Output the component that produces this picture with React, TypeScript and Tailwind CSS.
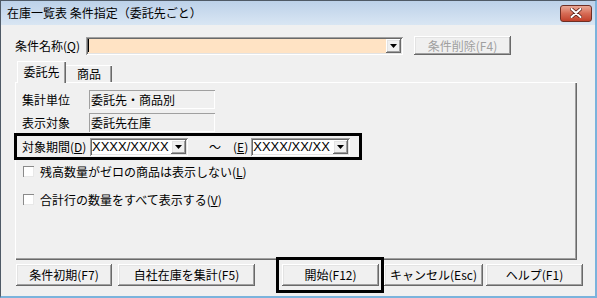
import React from "react";

const raised =
  "bg-[#f0f0f0] shadow-[inset_-1px_-1px_0_#696969,inset_1px_1px_0_#ffffff,inset_-2px_-2px_0_#a0a0a0,inset_2px_2px_0_#e3e3e3]";
const sunken =
  "shadow-[inset_1px_1px_0_#a0a0a0,inset_-1px_-1px_0_#ffffff,inset_2px_2px_0_#696969,inset_-2px_-2px_0_#e3e3e3]";
const flat =
  "shadow-[inset_1px_1px_0_#a0a0a0,inset_-1px_-1px_0_#ffffff]";

function Arrow() {
  return (
    <svg width="7" height="4" viewBox="0 0 7 4">
      <path d="M0 0H7L3.5 4Z" fill="#000" />
    </svg>
  );
}

function DropBtn() {
  return (
    <div className={`flex h-[14px] w-[15px] shrink-0 items-center justify-center ${raised}`}>
      <Arrow />
    </div>
  );
}

function Button({
  className,
  children,
  disabled,
}: {
  className: string;
  children: React.ReactNode;
  disabled?: boolean;
}) {
  return (
    <div
      className={`flex shrink-0 items-center justify-center ${raised} ${className} ${
        disabled ? "text-[#a0a0a0]" : "text-black"
      }`}
    >
      {children}
    </div>
  );
}

function Check({ children }: { children: React.ReactNode }) {
  return (
    <div className="flex h-[13px] items-center pl-[1px]">
      <div className="h-[11px] w-[11px] bg-white shadow-[inset_1px_1px_0_#8a8a8a,inset_-1px_-1px_0_#e8e8e8]" />
      <span className="ml-[6px]">{children}</span>
    </div>
  );
}

export default function App() {
  return (
    <div className="flex h-[298px] w-[597px] flex-col overflow-hidden border-l border-t border-[#4f5a66] border-r-2 border-b-2 border-r-[#7bb3dc] border-b-[#7bb3dc] bg-[#f0f0f0] font-['Noto_Sans_CJK_JP',sans-serif] text-[12px] leading-none text-black">
      {/* title bar */}
      <div className="flex h-[24px] shrink-0 items-center justify-between bg-gradient-to-b from-[#bcd1e9] to-[#d9e6f3] pl-[6px] pr-[3px]">
        <span className="text-[12px]">在庫一覧表 条件指定（委託先ごと）</span>
        <div className="flex h-[17px] w-[32px] items-center justify-center rounded-[3px] border border-[#6e2f25] bg-gradient-to-b from-[#e9a896] via-[#d66b55] to-[#c1402a]">
          <svg width="12" height="10" viewBox="0 0 12 10">
            <path d="M1.5 1L10.5 9M10.5 1L1.5 9" stroke="#5a2018" strokeWidth="3.6" strokeLinecap="round" />
            <path d="M1.5 1L10.5 9M10.5 1L1.5 9" stroke="#ffffff" strokeWidth="2" strokeLinecap="round" />
          </svg>
        </div>
      </div>

      {/* row 1 */}
      <div className="mt-[11px] flex h-[19px] items-center pl-[14px]">
        <span className="w-[71px] shrink-0">
          条件名称(<span className="underline">Q</span>)
        </span>
        <div className={`flex h-[18px] w-[317px] items-center justify-between bg-[#ffe3c4] pl-[2px] pr-[2px] ${sunken}`}>
          <div className="h-[13px] w-[1px] bg-black" />
          <DropBtn />
        </div>
        <Button className="ml-[11px] h-[19px] w-[97px]" disabled>
          条件削除(F4)
        </Button>
      </div>

      {/* tabs */}
      <div className="ml-[14px] mt-[6px] flex w-[562px] flex-col">
        <div className="flex h-[21px] items-end pl-[2px]">
          <div className="relative z-10 -mb-px flex h-[22px] w-[49px] items-center justify-center bg-[#f0f0f0] shadow-[inset_1px_1px_0_#ffffff,inset_-1px_0_0_#696969,inset_-2px_0_0_#a0a0a0]">
            委託先
          </div>
          <div className="flex h-[17px] w-[46px] items-center justify-center pt-[1px] shadow-[inset_0_1px_0_#ffffff,inset_-1px_0_0_#696969,inset_-2px_0_0_#a0a0a0]">
            商品
          </div>
        </div>
        <div className="flex h-[178px] flex-col bg-[#f0f0f0] pl-[7px] pt-[8px] shadow-[inset_1px_1px_0_#ffffff,inset_-1px_-1px_0_#696969,inset_-2px_-2px_0_#a0a0a0]">
          <div className="flex h-[19px] items-center">
            <span className="w-[67px] shrink-0">集計単位</span>
            <div className={`flex h-[19px] w-[126px] items-center pl-[2px] ${flat}`}>委託先・商品別</div>
          </div>
          <div className="mt-[4px] flex h-[19px] items-center">
            <span className="w-[67px] shrink-0">表示対象</span>
            <div className={`flex h-[19px] w-[126px] items-center pl-[2px] ${flat}`}>委託先在庫</div>
          </div>
          <div className="-ml-[8px] mt-[1px] flex h-[27px] w-[348px] items-center border-[3px] border-black pl-[5px]">
            <span className="w-[68px] shrink-0">
              対象期間(<span className="underline">D</span>)
            </span>
            <div className={`flex h-[18px] w-[98px] items-center justify-between bg-white pl-[2px] pr-[2px] ${sunken}`}>
              <span className="font-['Liberation_Sans',sans-serif] text-[13px]">XXXX/XX/XX</span>
              <DropBtn />
            </div>
            <span className="ml-[21px]">～</span>
            <span className="ml-[12px]">
              (<span className="underline">E</span>)
            </span>
            <div className={`ml-[3px] flex h-[18px] w-[99px] items-center justify-between bg-white pl-[2px] pr-[2px] ${sunken}`}>
              <span className="font-['Liberation_Sans',sans-serif] text-[13px]">XXXX/XX/XX</span>
              <DropBtn />
            </div>
          </div>
          <div className="mt-[5px]">
            <Check>
              残高数量がゼロの商品は表示しない(<span className="underline">L</span>)
            </Check>
          </div>
          <div className="mt-[15px]">
            <Check>
              合計行の数量をすべて表示する(<span className="underline">V</span>)
            </Check>
          </div>
        </div>
      </div>

      {/* bottom buttons */}
      <div className="relative z-10 -mt-[3px] flex h-[36px] items-center">
        <Button className="ml-[15px] h-[22px] w-[96px]">条件初期(F7)</Button>
        <Button className="ml-[6px] h-[22px] w-[137px]">自社在庫を集計(F5)</Button>
        <div className="ml-[21px] flex h-[36px] w-[108px] items-center border-[3px] border-black pl-[3px]">
          <Button className="h-[22px] w-[97px]">開始(F12)</Button>
        </div>
        <Button className="h-[22px] w-[99px]">キャンセル(Esc)</Button>
        <Button className="ml-[3px] h-[22px] w-[97px]">ヘルプ(F1)</Button>
      </div>
    </div>
  );
}
